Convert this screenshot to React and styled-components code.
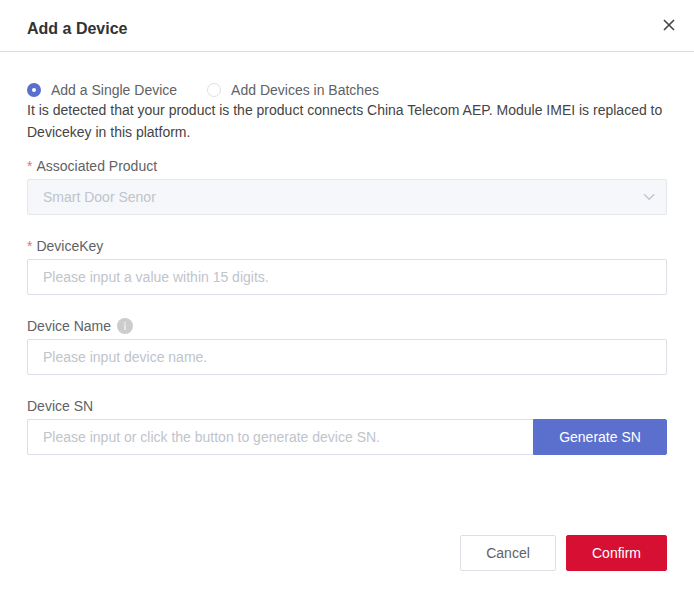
import React, { useState } from "react";
import styled, { createGlobalStyle } from "styled-components";

const GlobalStyle = createGlobalStyle`
  * { box-sizing: border-box; }
  body {
    margin: 0;
    background: #fff;
    font-family: "Liberation Sans", Arial, sans-serif;
    font-size: 14px;
    color: #606266;
  }
  button, input { font: inherit; }
`;

const Dialog = styled.div`
  display: flex;
  flex-direction: column;
  width: 694px;
  height: 597px;
  background: #fff;
`;

const Header = styled.header`
  display: flex;
  align-items: flex-start;
  justify-content: space-between;
  height: 52px;
  padding: 19px 19px 0 27px;
  border-bottom: 1px solid #dcdcdc;
`;

const Title = styled.h1`
  margin: 0;
  font-size: 16px;
  line-height: 20px;
  font-weight: 700;
  color: #333;
`;

const CloseButton = styled.button`
  display: flex;
  padding: 0;
  border: 0;
  background: none;
  color: #444;
  cursor: pointer;
`;

const Body = styled.main`
  flex: 1;
  padding: 29px 27px 0;
`;

const RadioGroup = styled.div`
  display: flex;
  gap: 30px;
  height: 18px;
`;

const Radio = styled.label`
  display: flex;
  align-items: center;
  gap: 10px;
  line-height: 16px;
  cursor: pointer;
`;

const RadioInput = styled.input`
  appearance: none;
  width: 14px;
  height: 14px;
  margin: 0;
  border: 1px solid #dcdfe6;
  border-radius: 50%;
  background: #fff;
  &:checked {
    border: 5px solid #5b6fcd;
  }
`;

const Notice = styled.p`
  margin: 0 0 10px;
  line-height: 22px;
  color: #444;
`;

const Field = styled.div`
  margin-bottom: 18px;
`;

const Label = styled.label`
  display: flex;
  align-items: center;
  height: 26px;
  line-height: 26px;
`;

const Required = styled.span`
  margin-right: 4px;
  color: #f56c6c;
`;

const InfoIcon = styled.svg`
  margin-left: 6px;
`;

const Control = styled.div`
  display: flex;
  height: 36px;
`;

const TextInput = styled.input`
  flex: 1;
  min-width: 0;
  padding: 0 15px;
  border: 1px solid #dcdfe6;
  border-right-width: ${(p) => (p.$joined ? 0 : "1px")};
  border-radius: ${(p) => (p.$joined ? "2px 0 0 2px" : "2px")};
  color: #606266;
  outline: none;
  &::placeholder {
    color: #c0c4cc;
    opacity: 1;
  }
`;

const Select = styled.div`
  display: flex;
  flex: 1;
  align-items: center;
  justify-content: space-between;
  padding: 0 10px 0 15px;
  border: 1px solid #e4e7ed;
  border-radius: 2px;
  background: #f5f7fa;
  color: #c0c4cc;
`;

const Button = styled.button`
  width: ${(p) => p.$width};
  height: 36px;
  padding: 0;
  border: 1px solid ${(p) => p.$border || p.$fill};
  border-radius: ${(p) => (p.$joined ? "0 2px 2px 0" : "2px")};
  background: ${(p) => p.$fill};
  color: ${(p) => p.$color || "#fff"};
  cursor: pointer;
`;

const Footer = styled.footer`
  display: flex;
  justify-content: flex-end;
  gap: 10px;
  padding: 0 27px 26px;
`;

export default function App() {
  const [mode, setMode] = useState("single");
  return (
    <>
      <GlobalStyle />
      <Dialog>
        <Header>
          <Title>Add a Device</Title>
          <CloseButton aria-label="Close">
            <svg width="12" height="12" viewBox="0 0 12 12" fill="none" stroke="currentColor" strokeWidth="1.6">
              <path d="M1 1 11 11M11 1 1 11" />
            </svg>
          </CloseButton>
        </Header>
        <Body>
          <RadioGroup>
            <Radio>
              <RadioInput type="radio" name="mode" checked={mode === "single"} onChange={() => setMode("single")} />
              Add a Single Device
            </Radio>
            <Radio>
              <RadioInput type="radio" name="mode" checked={mode === "batch"} onChange={() => setMode("batch")} />
              Add Devices in Batches
            </Radio>
          </RadioGroup>
          <Notice>
            It is detected that your product is the product connects China Telecom AEP. Module IMEI is replaced to
            Devicekey in this platform.
          </Notice>
          <Field>
            <Label><Required>*</Required>Associated Product</Label>
            <Control>
              <Select>
                Smart Door Senor
                <svg width="14" height="14" viewBox="0 0 14 14" fill="none" stroke="currentColor" strokeWidth="1.3">
                  <path d="M2.2 4.3 7.2 9.3 12.2 4.3" />
                </svg>
              </Select>
            </Control>
          </Field>
          <Field>
            <Label htmlFor="key"><Required>*</Required>DeviceKey</Label>
            <Control>
              <TextInput id="key" placeholder="Please input a value within 15 digits." />
            </Control>
          </Field>
          <Field>
            <Label htmlFor="name">
              Device Name
              <InfoIcon width="16" height="16" viewBox="0 0 16 16">
                <circle cx="8" cy="8" r="8" fill="#ccc" />
                <path d="M7.3 4h1.4v1.4H7.3zM7.3 6.4h1.4V12H7.3z" fill="#f2f2f2" />
              </InfoIcon>
            </Label>
            <Control>
              <TextInput id="name" placeholder="Please input device name." />
            </Control>
          </Field>
          <Field>
            <Label htmlFor="sn">Device SN</Label>
            <Control>
              <TextInput id="sn" $joined placeholder="Please input or click the button to generate device SN." />
              <Button $width="134px" $fill="#5b6fcd" $joined>Generate SN</Button>
            </Control>
          </Field>
        </Body>
        <Footer>
          <Button $width="96px" $fill="#fff" $border="#dcdfe6" $color="#606266">Cancel</Button>
          <Button $width="101px" $fill="#d70f32">Confirm</Button>
        </Footer>
      </Dialog>
    </>
  );
}
